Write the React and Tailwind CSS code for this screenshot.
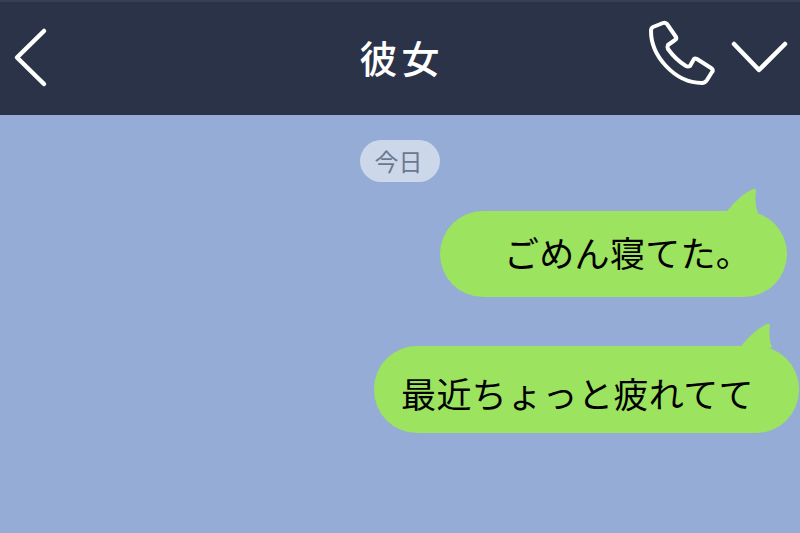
function BackIcon() {
  return (
    <svg width="60" height="115" viewBox="0 0 60 115" fill="none" stroke="white" strokeWidth="4.5" strokeLinecap="round" strokeLinejoin="round">
      <path d="M44 31 L17 57.5 L44 84" />
    </svg>
  )
}

function CallIcons() {
  return (
    <svg width="170" height="115" viewBox="0 0 170 115" fill="none" stroke="white" strokeLinecap="round" strokeLinejoin="round">
      {/* phone */}
      <path
        strokeWidth="4"
        d="M23 27 L33 23 Q35 22 37 24 L46 37 Q47 39 45 40 L38 45 Q37 47 38 49 Q46 60 56 66 Q58 67 60 66 L64 59 Q65 58 67 59 L81 68 Q84 70 82 72 L77 80 Q75 83 72 83 Q52 83 36 66 Q21 50 21 31 Q21 28 23 27 Z"
      />
      {/* chevron */}
      <path strokeWidth="4.5" d="M104 44 L129 70 L155 44" />
    </svg>
  )
}

function Bubble({ text, className, tail, textClass }) {
  return (
    <div className={`relative flex items-center rounded-[43px] bg-[#9ce35f] ${className}`}>
      <svg className={`absolute ${tail}`} width="32" height="26" viewBox="0 0 32 26" fill="#9ce35f">
        <path d="M0 23 Q14 6 26 1 Q29 0 29 3 Q27 14 31 25 Z" />
      </svg>
      <span className={`leading-none text-black whitespace-nowrap ${textClass}`}>{text}</span>
    </div>
  )
}

export default function App() {
  return (
    <div className="w-[800px] h-[533px] overflow-hidden bg-[#94acd6] flex flex-col font-['Noto_Sans_CJK_JP',sans-serif]">
      {/* Header */}
      <div className="h-[115px] bg-[#2a3347] border-t-2 border-[#353f58] grid grid-cols-[1fr_auto_1fr] items-center">
        <div className="-mt-0.5">
          <BackIcon />
        </div>
        <span className="text-white text-[38px] font-medium leading-none tracking-[4px] pl-[3px] -mt-[3px]">彼女</span>
        <div className="flex justify-end -mt-[3px]">
          <CallIcons />
        </div>
      </div>

      {/* Messages */}
      <div className="flex flex-col items-end">
        <div className="self-center mt-[25px] h-[42px] w-[80px] pr-[3px] rounded-full bg-[#cdd7ea] flex items-center justify-center text-[24px] leading-none text-[#6b7890]">
          今日
        </div>
        <Bubble
          text="ごめん寝てた。"
          className="mt-[29px] mr-[13px] w-[347px] h-[86px] pl-[64px] pb-[6px]"
          tail="left-[287px] -top-[23px]"
          textClass="text-[35px] tracking-[0.3px]"
        />
        <Bubble
          text="最近ちょっと疲れてて"
          className="mt-[49px] mr-[1px] w-[425px] h-[87px] pl-[27px] pt-[6px]"
          tail="left-[367px] -top-[23px]"
          textClass="text-[35px] tracking-[0.4px]"
        />
      </div>
    </div>
  )
}
